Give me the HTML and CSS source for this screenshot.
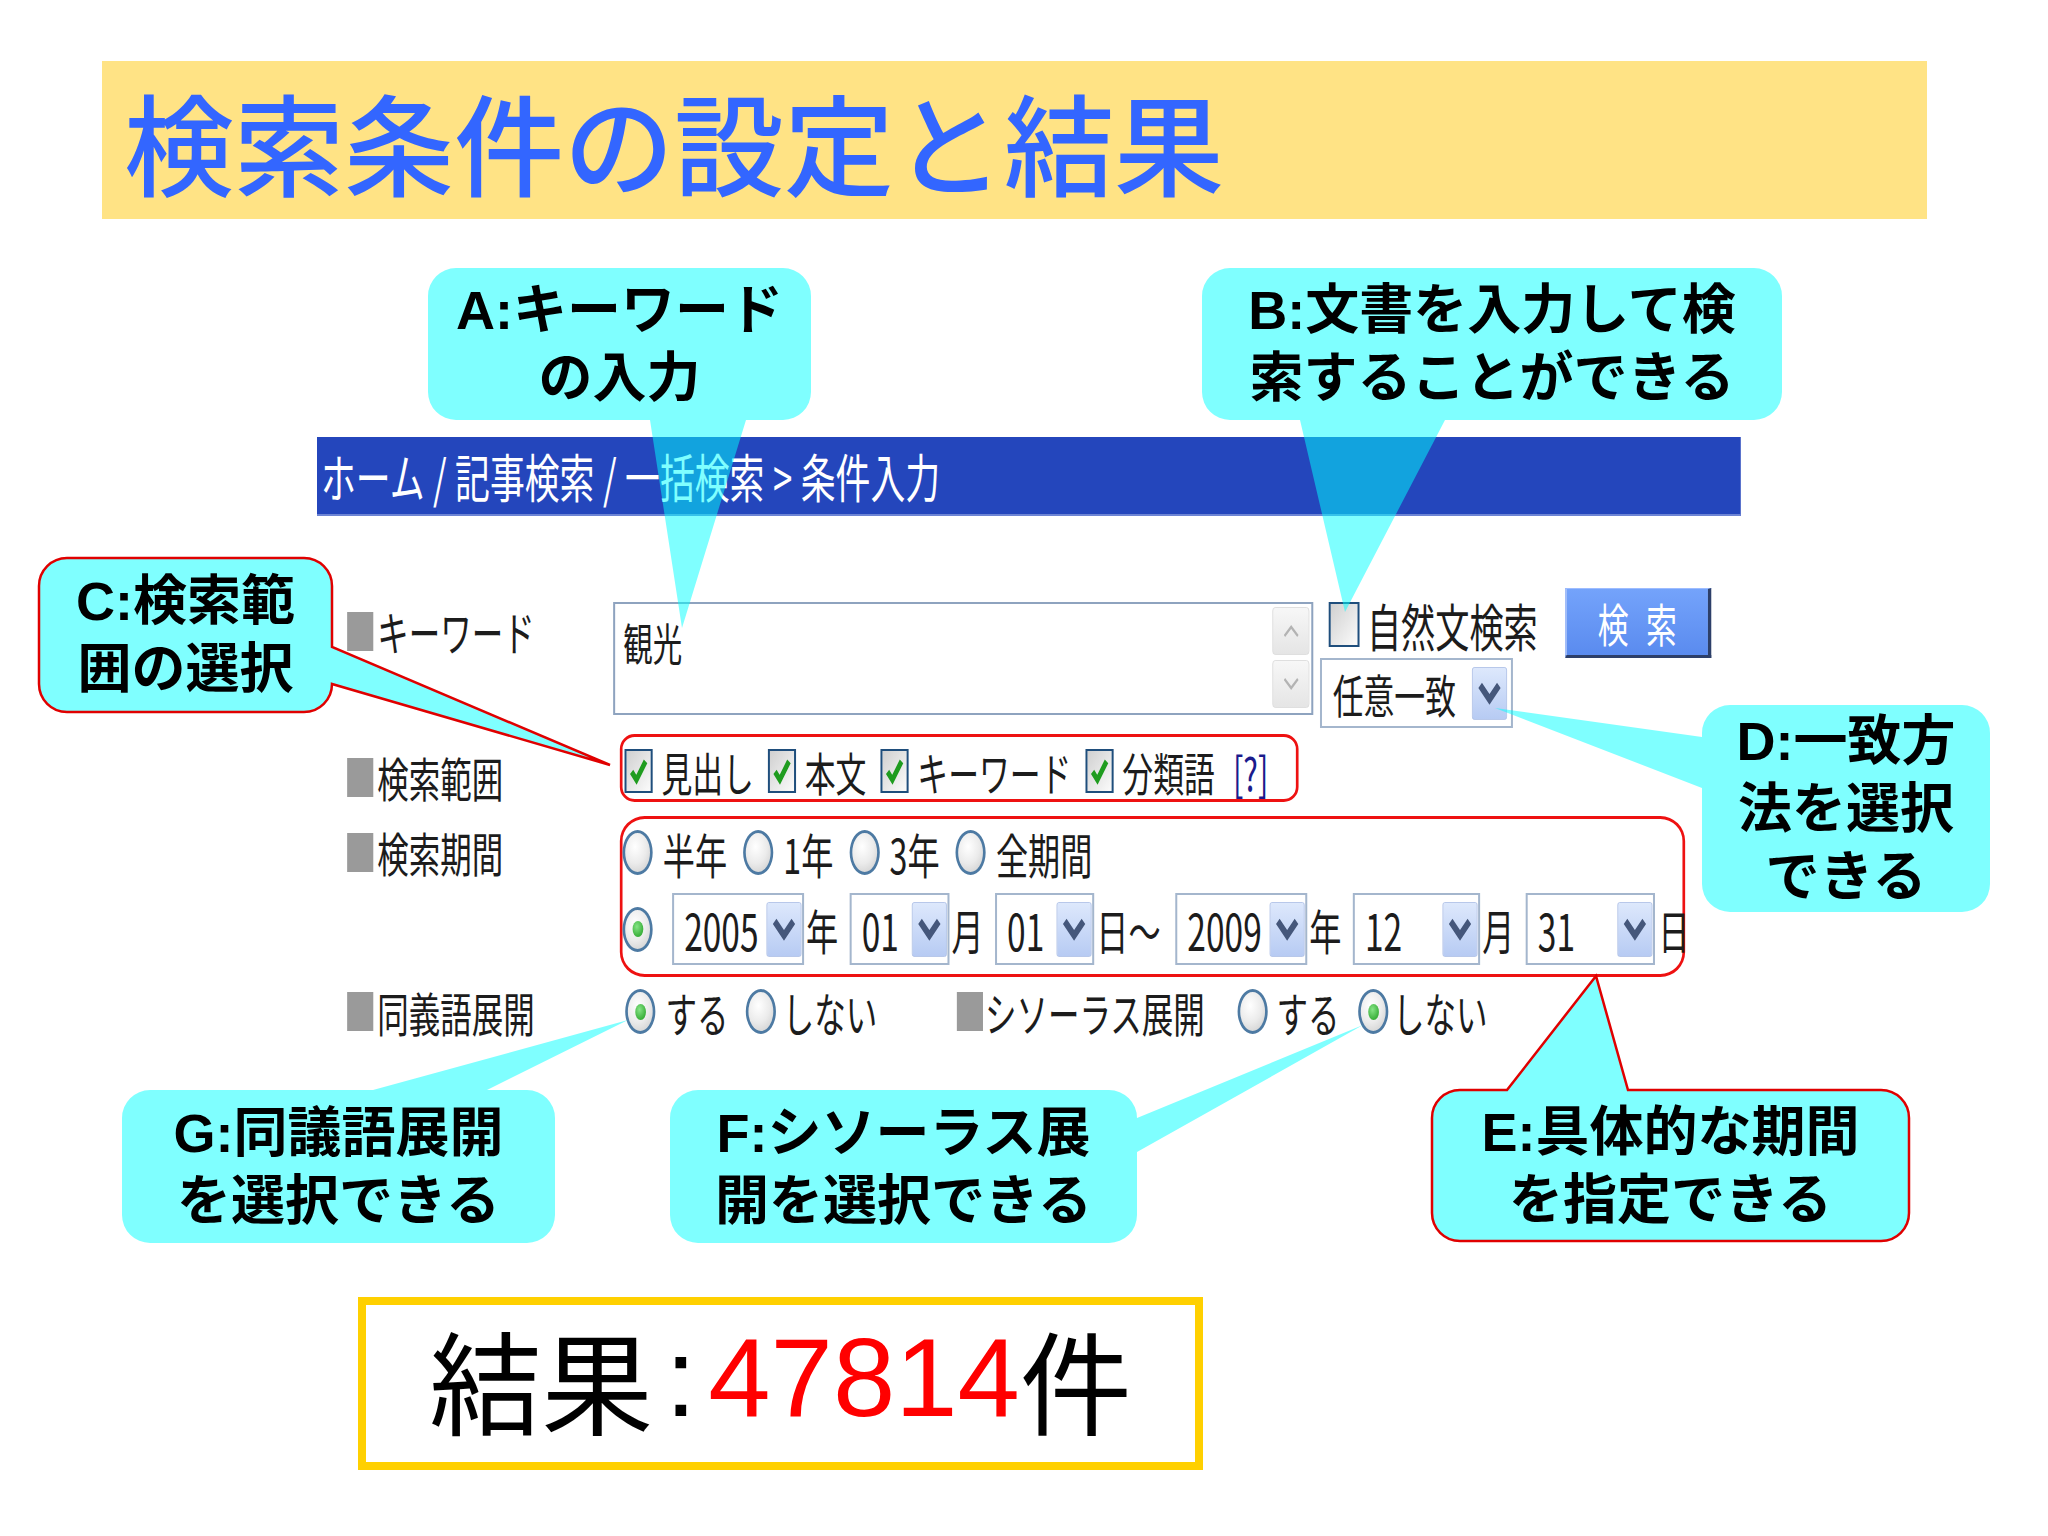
FILE: index.html
```html
<!DOCTYPE html>
<html lang="ja">
<head>
<meta charset="utf-8">
<title>検索条件の設定と結果</title>
<link rel="stylesheet" href="styles.css">
</head>
<body>
<div class="slide">
  <h1 class="title">検索条件の設定と結果</h1>

  <div class="shot">
    <div class="form">
      <div class="nav">ホーム / 記事検索 / 一括検索 &gt; 条件入力</div>

      <div class="row row-kw">
        <div class="lab"><span class="sq"></span>キーワード</div>
        <div class="ta">
          <span class="ta-text">観光</span>
          <div class="sb">
            <span class="sbb"><svg class="arr" viewBox="0 0 30 18"><path d="M5 14 L15 5 L25 14"/></svg></span>
            <span class="sbb"><svg class="arr" viewBox="0 0 30 18"><path d="M5 4 L15 13 L25 4"/></svg></span>
          </div>
        </div>
        <div class="mid">
          <div class="nat"><span class="cb"></span>自然文検索</div>
          <div class="sel sel-match"><span>任意一致</span><span class="dd"><svg class="chev" viewBox="0 0 30 18"><path d="M4 3 L15 14 L26 3"/></svg></span></div>
        </div>
        <div class="btn">検索</div>
      </div>

      <div class="row row-scope">
        <div class="lab"><span class="sq"></span>検索範囲</div>
        <div class="redbox scope">
          <span class="opt"><span class="cb"><svg class="tick" viewBox="0 0 20 20"><path d="M3.5 10.5 L8 15.5 L16.5 4"/></svg></span>見出し</span>
          <span class="opt"><span class="cb"><svg class="tick" viewBox="0 0 20 20"><path d="M3.5 10.5 L8 15.5 L16.5 4"/></svg></span>本文</span>
          <span class="opt"><span class="cb"><svg class="tick" viewBox="0 0 20 20"><path d="M3.5 10.5 L8 15.5 L16.5 4"/></svg></span>キーワード</span>
          <span class="opt"><span class="cb"><svg class="tick" viewBox="0 0 20 20"><path d="M3.5 10.5 L8 15.5 L16.5 4"/></svg></span>分類語</span>
          <span class="help">[?]</span>
        </div>
      </div>

      <div class="row row-period">
        <div class="lab"><span class="sq"></span>検索期間</div>
        <div class="redbox period">
          <div class="pline pline1">
            <span class="ropt"><span class="radio"></span>半年</span>
            <span class="ropt"><span class="radio"></span>1年</span>
            <span class="ropt"><span class="radio"></span>3年</span>
            <span class="ropt"><span class="radio"></span>全期間</span>
          </div>
          <div class="pline pline2">
            <span class="radio on first"></span>
            <span class="sel dsel w197"><span>2005</span><span class="dd"><svg class="chev" viewBox="0 0 30 18"><path d="M4 3 L15 14 L26 3"/></svg></span></span>
            <span class="unit">年</span>
            <span class="sel dsel w149"><span>01</span><span class="dd"><svg class="chev" viewBox="0 0 30 18"><path d="M4 3 L15 14 L26 3"/></svg></span></span>
            <span class="unit">月</span>
            <span class="sel dsel w148"><span>01</span><span class="dd"><svg class="chev" viewBox="0 0 30 18"><path d="M4 3 L15 14 L26 3"/></svg></span></span>
            <span class="unit wide">日～</span>
            <span class="sel dsel w197"><span>2009</span><span class="dd"><svg class="chev" viewBox="0 0 30 18"><path d="M4 3 L15 14 L26 3"/></svg></span></span>
            <span class="unit">年</span>
            <span class="sel dsel w190"><span>12</span><span class="dd"><svg class="chev" viewBox="0 0 30 18"><path d="M4 3 L15 14 L26 3"/></svg></span></span>
            <span class="unit">月</span>
            <span class="sel dsel w193"><span>31</span><span class="dd"><svg class="chev" viewBox="0 0 30 18"><path d="M4 3 L15 14 L26 3"/></svg></span></span>
            <span class="unit last">日</span>
          </div>
        </div>
      </div>

      <div class="row row-syn">
        <div class="lab"><span class="sq"></span>同義語展開</div>
        <span class="ropt s1"><span class="radio on"></span>する</span>
        <span class="ropt s2"><span class="radio"></span>しない</span>
        <span class="thes"><span class="sq"></span>シソーラス展開</span>
        <span class="ropt s3"><span class="radio"></span>する</span>
        <span class="ropt s4"><span class="radio on"></span>しない</span>
      </div>
    </div>
  </div>

  <div class="result">結果<span class="colon">:</span><span class="num">47814</span>件</div>

  <svg class="callouts" viewBox="0 0 2048 1536" width="2048" height="1536">
    <path class="shape" d="M456,268 H783 A28,28 0 0 1 811,296 V392 A28,28 0 0 1 783,420 H746 L682,628 L650,420 H456 A28,28 0 0 1 428,392 V296 A28,28 0 0 1 456,268 Z"/>
    <path class="shape" d="M1230,268 H1754 A28,28 0 0 1 1782,296 V392 A28,28 0 0 1 1754,420 H1445 L1345,612 L1300,420 H1230 A28,28 0 0 1 1202,392 V296 A28,28 0 0 1 1230,268 Z"/>
    <path class="shape red" d="M67,558 H304 A28,28 0 0 1 332,586 V647 L610,765 L332,684 A28,28 0 0 1 304,712 H67 A28,28 0 0 1 39,684 V586 A28,28 0 0 1 67,558 Z"/>
    <path class="shape" d="M1730,705 H1962 A28,28 0 0 1 1990,733 V884 A28,28 0 0 1 1962,912 H1730 A28,28 0 0 1 1702,884 V788 L1495,708 L1702,737 V733 A28,28 0 0 1 1730,705 Z"/>
    <path class="shape red" d="M1460,1090 H1507 L1596,976 L1628,1090 H1881 A28,28 0 0 1 1909,1118 V1213 A28,28 0 0 1 1881,1241 H1460 A28,28 0 0 1 1432,1213 V1118 A28,28 0 0 1 1460,1090 Z"/>
    <path class="shape" d="M698,1090 H1109 A28,28 0 0 1 1137,1118 L1363,1025 L1137,1152 V1215 A28,28 0 0 1 1109,1243 H698 A28,28 0 0 1 670,1215 V1118 A28,28 0 0 1 698,1090 Z"/>
    <path class="shape" d="M150,1090 H373 L628,1020 L487,1090 H527 A28,28 0 0 1 555,1118 V1215 A28,28 0 0 1 527,1243 H150 A28,28 0 0 1 122,1215 V1118 A28,28 0 0 1 150,1090 Z"/>
  </svg>

  <div class="note n-a">A:キーワード<br>の入力</div>
  <div class="note n-b">B:文書を入力して検<br>索することができる</div>
  <div class="note n-c">C:検索範<br>囲の選択</div>
  <div class="note n-d">D:一致方<br>法を選択<br>できる</div>
  <div class="note n-e">E:具体的な期間<br>を指定できる</div>
  <div class="note n-f">F:シソーラス展<br>開を選択できる</div>
  <div class="note n-g">G:同議語展開<br>を選択できる</div>
</div>
</body>
</html>
```

FILE: styles.css
```css
* { box-sizing: border-box; }
html, body { margin: 0; padding: 0; background: #fff; }

.slide {
  position: relative;
  width: 2048px;
  height: 1536px;
  overflow: hidden;
  background: #fff;
  font-family: "Noto Sans CJK JP", sans-serif;
}

.title {
  margin: 61px 0 0 102px;
  width: 1825px;
  height: 158px;
  padding-left: 22px;
  background: #FFE385;
  color: #3366FF;
  font-size: 110px;
  font-weight: 500;
  line-height: 158px;
  white-space: nowrap;
}

/* embedded screenshot of the search form (horizontally squeezed) */
.shot {
  margin: 218px 0 0 317px;
  width: 1424px;
  height: 603px;
}
.form {
  width: 2125px;
  transform: scaleX(0.67);
  transform-origin: 0 0;
  color: #1c1c1c;
}
.nav {
  height: 79px;
  padding-left: 6px;
  background: #2446BC;
  border-bottom: 2px solid #6d84d4;
  color: #fff;
  font-size: 52px;
  line-height: 77px;
  white-space: nowrap;
  word-spacing: 1px;
}

.row {
  display: flex;
  align-items: flex-start;
  padding-left: 45px;
}
.lab {
  flex: none;
  width: 397px;
  height: 50px;
  display: flex;
  align-items: center;
  font-size: 47px;
  line-height: 50px;
  white-space: nowrap;
}
.sq {
  flex: none;
  width: 39px;
  height: 39px;
  margin-right: 6px;
  background: #9a9a9a;
}

/* keyword row */
.row-kw { margin-top: 72px; }
.row-kw .lab { margin-top: 18px; }
.ta {
  flex: none;
  width: 1045px;
  height: 113px;
  margin-top: 14px;
  display: flex;
  justify-content: space-between;
  background: #fff;
  border: 2px solid #8ea3bf;
  border-left-width: 3px;
  border-right-width: 3px;
}
.ta-text {
  padding: 16px 0 0 12px;
  font-size: 44px;
  line-height: 44px;
}
.sb {
  display: flex;
  flex-direction: column;
  gap: 5px;
  padding: 3px 3px 0 0;
}
.sbb {
  width: 55px;
  height: 48px;
  display: flex;
  align-items: center;
  justify-content: center;
  background: linear-gradient(#f7f7f7, #e5e5e5);
  border: 1px solid #d9d9d9;
  border-radius: 4px;
}
.arr { width: 30px; height: 18px; }
.arr path { fill: none; stroke: #b3b3b3; stroke-width: 3; }

.mid {
  flex: none;
  width: 288px;
  margin-left: 10px;
  display: flex;
  flex-direction: column;
}
.nat {
  margin-top: 14px;
  height: 45px;
  padding-left: 13px;
  display: flex;
  align-items: center;
  gap: 11px;
  font-size: 51px;
  white-space: nowrap;
}
.cb {
  flex: none;
  width: 42px;
  height: 44px;
  display: flex;
  align-items: center;
  justify-content: center;
  background: linear-gradient(135deg, #d0d0d0, #fbfbfb);
  border: 2px solid #1f4e7c;
  border-left-width: 3px;
  border-right-width: 3px;
}
.nat .cb { width: 46px; height: 45px; }
.tick { width: 32px; height: 34px; }
.tick path { fill: none; stroke: #1f9c1f; stroke-width: 4; }

.sel {
  flex: none;
  display: flex;
  align-items: center;
  justify-content: space-between;
  background: #fff;
  border: 2px solid #a4b6cd;
  border-left-width: 3px;
  border-right-width: 3px;
}
.sel-match {
  margin-top: 11px;
  width: 288px;
  height: 70px;
  padding-left: 16px;
  font-size: 46px;
}
.dd {
  flex: none;
  width: 52px;
  height: 53px;
  margin-right: 6px;
  display: flex;
  align-items: center;
  justify-content: center;
  background: linear-gradient(#dde8fc, #b7cbf3);
  border: 1px solid #a9bde6;
  border-radius: 3px;
}
.chev { width: 38px; height: 24px; }
.chev path { fill: none; stroke: #45577b; stroke-width: 6; }

.btn {
  flex: none;
  width: 218px;
  height: 70px;
  margin-left: 78px;
  padding-left: 26px;
  display: flex;
  align-items: center;
  justify-content: center;
  background: linear-gradient(#74a3fb, #5a8bef);
  border-top: 1px solid #9dbcff;
  border-left: 2px solid #8aacf8;
  border-right: 5px solid #2d3f69;
  border-bottom: 3px solid #2d3f69;
  color: #fff;
  font-size: 46px;
  letter-spacing: 26px;
}

/* red outlined groups */
.redbox {
  flex: none;
  margin-left: 10px;
  border: 3px solid #EE1111;
  border-left-width: 4.5px;
  border-right-width: 4.5px;
  white-space: nowrap;
}

/* scope row */
.row-scope { margin-top: 6px; }
.row-scope .lab { margin-top: 18px; }
.scope {
  width: 1013px;
  height: 68px;
  padding: 6px 0 0 3px;
  border-radius: 22px / 15px;
  display: flex;
  align-items: center;
  font-size: 46px;
}
.opt {
  display: flex;
  align-items: center;
  gap: 13px;
  margin-right: 21px;
}
.help { color: #1b1b8c; margin-left: 6px; }

/* period row */
.row-period { margin-top: 14px; }
.row-period .lab { margin-top: 11px; }
.period {
  width: 1590px;
  height: 161px;
  padding-top: 11px;
  border-radius: 37px / 25px;
  display: flex;
  flex-direction: column;
  gap: 18px;
  font-size: 48px;
}
.pline { display: flex; align-items: center; }
.pline1 { height: 45px; }
.pline1 .ropt { margin-right: 24px; }
.pline2 { height: 72px; }

.radio {
  flex: none;
  width: 45px;
  height: 45px;
  border-radius: 50%;
  display: flex;
  align-items: center;
  justify-content: center;
  background: radial-gradient(circle at 40% 35%, #ffffff 0%, #ebebeb 50%, #c8c8c8 100%);
  border: 3px solid #4d7aa3;
  border-left-width: 4px;
  border-right-width: 4px;
}
.radio.on::after {
  content: "";
  width: 16px;
  height: 16px;
  border-radius: 50%;
  background: radial-gradient(circle at 40% 35%, #86e486, #1b9a1b);
}
.ropt {
  display: flex;
  align-items: center;
  gap: 15px;
  margin-right: 17px;
}
.radio.first { margin-right: 29px; }

.dsel {
  height: 72px;
  padding-left: 15px;
  font-size: 50px;
}
.dsel .dd { height: 55px; margin-right: 1px; }
.w197 { width: 197px; }
.w149 { width: 149px; }
.w148 { width: 148px; }
.w190 { width: 190px; }
.w193 { width: 193px; }
.unit { margin: 0 17px 0 3px; }
.unit.wide { margin-right: 22px; }
.unit.last { margin: 0 0 0 5px; font-size: 46px; }

/* synonym row */
.row-syn {
  margin-top: 11px;
  height: 47px;
  align-items: center;
  font-size: 47px;
  white-space: nowrap;
}
.ropt.s1 { margin-left: 18px; margin-right: 26px; }
.ropt.s2 { gap: 10px; margin-right: 0; }
.thes {
  display: flex;
  align-items: center;
  margin-left: 119px;
}
.thes .sq { margin-right: 3px; }
.ropt.s3 { margin-left: 49px; gap: 13px; margin-right: 28px; }
.ropt.s4 { gap: 7px; margin-right: 0; }

/* result box */
.result {
  margin: 257px 0 0 358px;
  width: 845px;
  height: 173px;
  padding-bottom: 12px;
  display: flex;
  align-items: center;
  justify-content: center;
  border: 8px solid #FFD000;
  background: #fff;
  color: #000;
  font-size: 112px;
  line-height: 1;
  white-space: nowrap;
}
.colon {
  margin: 0 12px;
  font-family: "Liberation Sans", sans-serif;
}
.num {
  color: #FF0000;
  font-family: "Liberation Sans", sans-serif;
}

/* callouts */
.callouts {
  position: absolute;
  left: 0;
  top: 0;
  pointer-events: none;
}
.shape { fill: #00FFFF; fill-opacity: 0.5; }
.shape.red { stroke: #E00000; stroke-width: 2.5; }

.note {
  position: absolute;
  display: flex;
  align-items: center;
  justify-content: center;
  text-align: center;
  color: #000;
  font-family: "Liberation Sans", "Noto Sans CJK JP", sans-serif;
  font-weight: 700;
  font-size: 54px;
  line-height: 68px;
  white-space: nowrap;
}
.n-a { left: 428px; top: 268px; width: 383px; height: 152px; }
.n-b { left: 1202px; top: 268px; width: 580px; height: 152px; }
.n-c { left: 39px; top: 558px; width: 293px; height: 154px; }
.n-d { left: 1702px; top: 705px; width: 288px; height: 207px; }
.n-e { left: 1432px; top: 1090px; width: 477px; height: 151px; }
.n-f { left: 670px; top: 1090px; width: 467px; height: 153px; }
.n-g { left: 122px; top: 1090px; width: 433px; height: 153px; }
```
